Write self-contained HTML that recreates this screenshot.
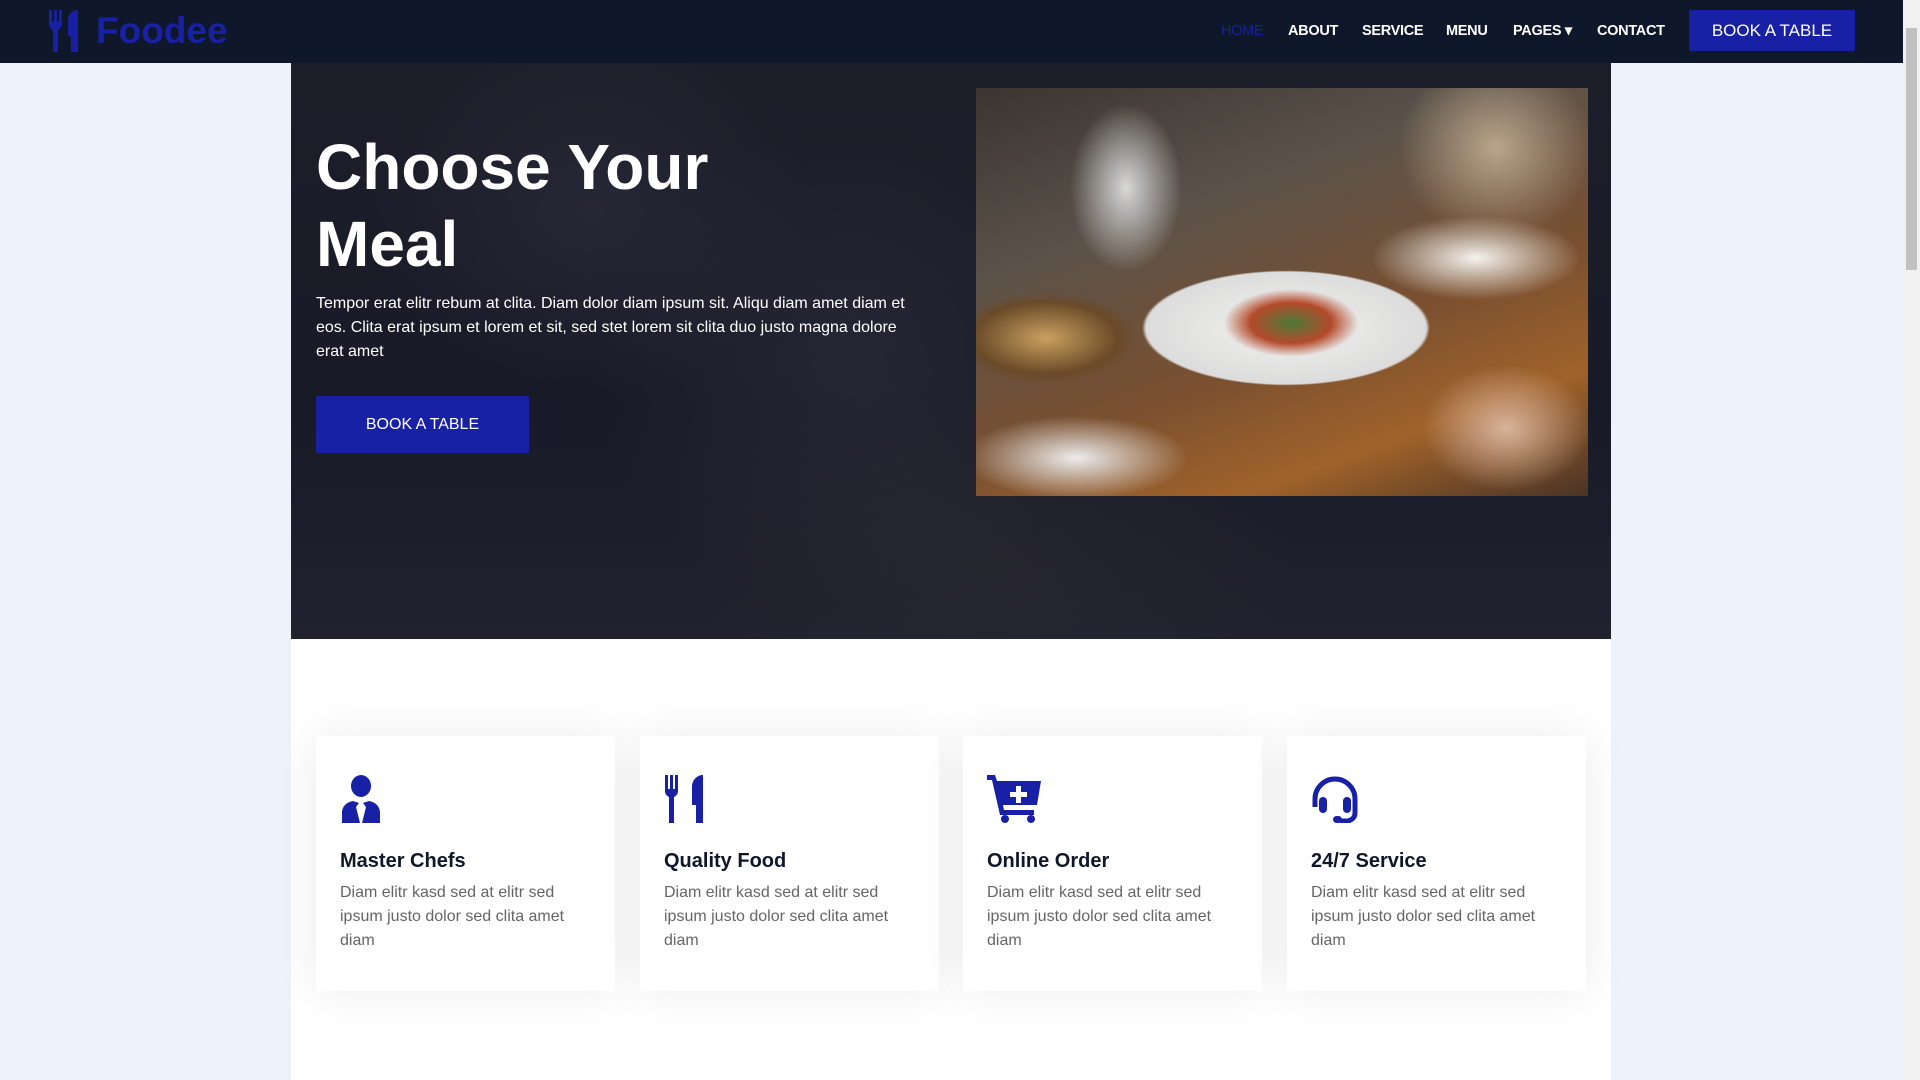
<!DOCTYPE html>
<html><head><meta charset="utf-8"><style>
*{margin:0;padding:0;box-sizing:border-box}
html,body{width:1920px;height:1080px;overflow:hidden}
body{background:#eef3fb;font-family:"Liberation Sans",Arial,sans-serif;position:relative}
.nav{position:absolute;left:0;top:0;width:1903px;height:63px;background:#0f172a}
.logo{position:absolute;left:48px;top:10px;display:flex;align-items:center}
.logo span{color:#1820a6;font-weight:bold;font-size:37px;margin-left:16px}
.links a{position:absolute;top:23px;color:#fff;font-size:14.5px;font-weight:bold;text-decoration:none;letter-spacing:-0.3px}
.nbtn{position:absolute;left:1689px;top:10px;width:166px;height:41px;background:#1820a6;color:#fff;font-size:17px;display:flex;align-items:center;justify-content:center;border-radius:2px}
.sb{position:absolute;right:0;top:0;width:17px;height:1080px;background:#f1f1f1}
.sb .th{position:absolute;left:3px;top:28px;width:11px;height:242px;background:#c1c1c1}
.hero{position:absolute;left:291px;top:63px;width:1320px;height:576px;background:
radial-gradient(ellipse 220px 180px at 300px 150px,rgba(60,60,75,.35),transparent),
radial-gradient(ellipse 260px 240px at 560px 300px,rgba(55,57,72,.4),transparent),
radial-gradient(ellipse 300px 200px at 700px 500px,rgba(60,52,52,.3),transparent),
linear-gradient(180deg,#1c1e2a 0%,#181a27 60%,#20222f 100%)}
.hero h1{position:absolute;left:25px;top:66px;color:#fff;font-size:64px;line-height:77px;font-weight:bold}
.hero p{position:absolute;left:25px;top:229px;width:605px;color:#fff;font-size:16px;line-height:24px}
.hbtn{position:absolute;left:25px;top:333px;width:213px;height:57px;background:#1820a6;color:#fff;font-size:16px;display:flex;align-items:center;justify-content:center;border-radius:2px}
.img{position:absolute;left:685px;top:25px;width:612px;height:408px;overflow:hidden;background:
radial-gradient(ellipse 90px 45px at 315px 235px,#4d7a3a,#b44a2a 45%,transparent 75%),
radial-gradient(ellipse 200px 80px at 310px 240px,#f2f2f0 0%,#dcdcdc 70%,transparent 72%),
radial-gradient(ellipse 120px 60px at 70px 250px,#caa060,#6a4a28 60%,transparent 75%),
radial-gradient(ellipse 150px 60px at 500px 170px,#f5f3ee,transparent 70%),
radial-gradient(ellipse 120px 90px at 530px 340px,#d9b39a,transparent 70%),
radial-gradient(ellipse 160px 60px at 100px 370px,#ececec,transparent 70%),
radial-gradient(ellipse 80px 120px at 150px 100px,#d8d8d8,transparent 70%),
radial-gradient(ellipse 140px 130px at 520px 60px,#b9a58a,transparent 70%),
linear-gradient(160deg,#3a3530 0%,#5a524a 30%,#7a5030 60%,#a0622a 80%,#4a3426 100%)}
.white{position:absolute;left:291px;top:639px;width:1320px;height:441px;background:#fff}
.card{position:absolute;top:736px;width:299px;height:255px;background:#fff;box-shadow:0 0 45px rgba(0,0,0,.08)}
.card svg{position:absolute;left:24px;top:39px}
.card h5{position:absolute;left:24px;top:114px;font-size:20px;font-weight:bold;color:#0f172a}
.card p{position:absolute;left:24px;top:145px;width:250px;font-size:16px;line-height:24px;color:#666565}
</style></head><body>
<div class="nav">
 <div class="logo">
  <svg width="32" height="42" viewBox="0 0 32 42" fill="#1820a6"><path d="M1 0h3v12h2V0h3v12h2V0h3v14c0 3-2 5-4 6v22H5V20c-2-1-4-3-4-6z"/><path d="M30 0v42h-7V26h-3V10C20 4 25 0 30 0z"/></svg>
  <span>Foodee</span>
 </div>
 <div class="links">
  <a style="left:1221px;color:#1820a6;font-weight:normal">HOME</a>
  <a style="left:1288px">ABOUT</a>
  <a style="left:1362px">SERVICE</a>
  <a style="left:1446px">MENU</a>
  <a style="left:1513px">PAGES ▾</a>
  <a style="left:1597px">CONTACT</a>
 </div>
 <div class="nbtn">BOOK A TABLE</div>
</div>
<div class="sb"><div class="th"></div></div>
<div class="hero">
 <h1>Choose Your<br>Meal</h1>
 <p>Tempor erat elitr rebum at clita. Diam dolor diam ipsum sit. Aliqu diam amet diam et eos. Clita erat ipsum et lorem et sit, sed stet lorem sit clita duo justo magna dolore erat amet</p>
 <div class="hbtn">BOOK A TABLE</div>
 <div class="img"></div>
</div>
<div class="white"></div>
<div class="card" style="left:316px"><svg width="42" height="48" viewBox="0 0 42 48" fill="#1820a6"><ellipse cx="21" cy="11" rx="10" ry="11"/><path d="M2 48V38c0-7 5-11 11-12l6 2-3 4 4 16h2l4-16-3-4 6-2c6 1 11 5 11 12v10z"/></svg><h5>Master Chefs</h5><p>Diam elitr kasd sed at elitr sed ipsum justo dolor sed clita amet diam</p></div>
<div class="card" style="left:640px"><svg width="40" height="48" viewBox="0 0 40 48" fill="#1820a6"><path d="M1 0h3v14h2V0h3v14h2V0h3v16c0 3-2 5-4 6v26H5V22c-2-1-4-3-4-6z"/><path d="M39 0v48h-7V30h-4V12C28 5 33 0 39 0z"/></svg><h5>Quality Food</h5><p>Diam elitr kasd sed at elitr sed ipsum justo dolor sed clita amet diam</p></div>
<div class="card" style="left:963px"><svg width="54" height="48" viewBox="0 0 54 48" fill="#1820a6"><path d="M0 0h8l2 6h44l-4 24H16l1 5h30v5H13L5 5H0z"/><circle cx="18" cy="44" r="4"/><circle cx="44" cy="44" r="4"/><path d="M29 11h5v6h6v5h-6v6h-5v-6h-6v-5h6z" fill="#fff"/></svg><h5>Online Order</h5><p>Diam elitr kasd sed at elitr sed ipsum justo dolor sed clita amet diam</p></div>
<div class="card" style="left:1287px"><svg width="48" height="48" viewBox="0 0 48 48" fill="none" stroke="#1820a6"><path d="M4 32V24a20 20 0 0 1 40 0v14c0 5-4 8-9 8h-6" stroke-width="5"/><rect x="8" y="22" width="8" height="16" rx="4" fill="#1820a6" stroke="none"/><rect x="32" y="22" width="8" height="16" rx="4" fill="#1820a6" stroke="none"/><rect x="22" y="41" width="9" height="7" rx="3.5" fill="#1820a6" stroke="none"/></svg><h5>24/7 Service</h5><p>Diam elitr kasd sed at elitr sed ipsum justo dolor sed clita amet diam</p></div>
</body></html>
